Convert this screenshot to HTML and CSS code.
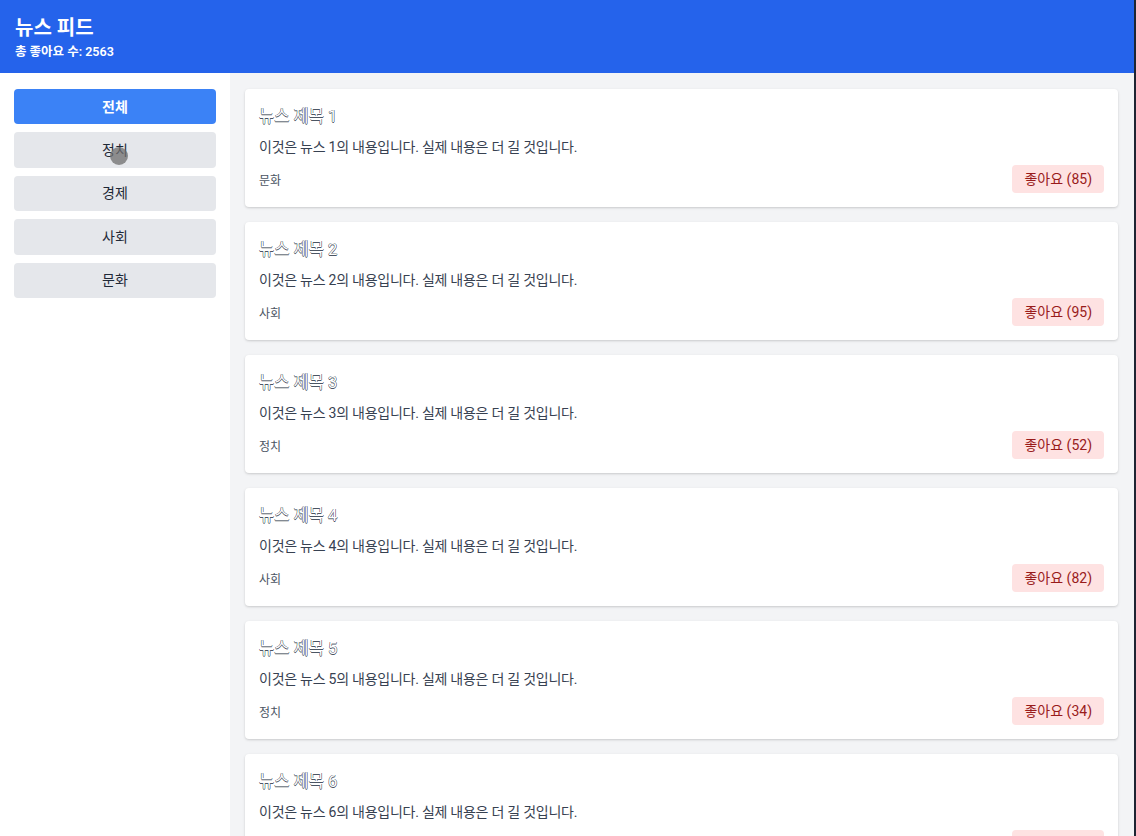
FILE: index.html
```html
<!DOCTYPE html>
<html lang="ko">
<head>
<meta charset="utf-8">
<title>뉴스 피드</title>
<link rel="stylesheet" href="styles.css">
</head>
<body>
<div class="app">
  <header class="header">
    <h1 class="header-title">뉴스 피드</h1>
    <p class="header-sub">총 좋아요 수: 2563</p>
  </header>
  <div class="body-row">
    <aside class="sidebar">
      <button class="cat-btn active">전체</button>
      <button class="cat-btn">정치</button>
      <button class="cat-btn">경제</button>
      <button class="cat-btn">사회</button>
      <button class="cat-btn">문화</button>
    </aside>
    <main class="feed">
      <article class="card">
        <h2 class="card-title">뉴스 제목 1</h2>
        <p class="card-text">이것은 뉴스 1의 내용입니다. 실제 내용은 더 길 것입니다.</p>
        <div class="card-foot"><span class="card-cat">문화</span><button class="like-btn">좋아요 (85)</button></div>
      </article>
      <article class="card">
        <h2 class="card-title">뉴스 제목 2</h2>
        <p class="card-text">이것은 뉴스 2의 내용입니다. 실제 내용은 더 길 것입니다.</p>
        <div class="card-foot"><span class="card-cat">사회</span><button class="like-btn">좋아요 (95)</button></div>
      </article>
      <article class="card">
        <h2 class="card-title">뉴스 제목 3</h2>
        <p class="card-text">이것은 뉴스 3의 내용입니다. 실제 내용은 더 길 것입니다.</p>
        <div class="card-foot"><span class="card-cat">정치</span><button class="like-btn">좋아요 (52)</button></div>
      </article>
      <article class="card">
        <h2 class="card-title">뉴스 제목 4</h2>
        <p class="card-text">이것은 뉴스 4의 내용입니다. 실제 내용은 더 길 것입니다.</p>
        <div class="card-foot"><span class="card-cat">사회</span><button class="like-btn">좋아요 (82)</button></div>
      </article>
      <article class="card">
        <h2 class="card-title">뉴스 제목 5</h2>
        <p class="card-text">이것은 뉴스 5의 내용입니다. 실제 내용은 더 길 것입니다.</p>
        <div class="card-foot"><span class="card-cat">정치</span><button class="like-btn">좋아요 (34)</button></div>
      </article>
      <article class="card">
        <h2 class="card-title">뉴스 제목 6</h2>
        <p class="card-text">이것은 뉴스 6의 내용입니다. 실제 내용은 더 길 것입니다.</p>
        <div class="card-foot"><span class="card-cat">경제</span><button class="like-btn">좋아요 (61)</button></div>
      </article>
    </main>
  </div>
  <div class="touch-dot"></div>
</div>
</body>
</html>
```
FILE: styles.css
```css
html, body {
  margin: 0;
  padding: 0;
  height: 100%;
  overflow: hidden;
}
body {
  font-family: Roboto, "Noto Sans CJK KR", sans-serif;
  background: #1e2433;
}
.app {
  position: relative;
  height: 100vh;
  margin-right: 2px;
  display: flex;
  flex-direction: column;
  background: #f3f4f6;
}
.header {
  background: #2563eb;
  color: #fff;
  padding: 14px 15px 13px;
  height: 46px;
  flex-shrink: 0;
}
.header-title {
  margin: 0;
  font-size: 20px;
  line-height: 28px;
  font-weight: 700;
}
.header-sub {
  margin: 2px 0 0;
  font-size: 12.5px;
  line-height: 16px;
  font-weight: 600;
}
.body-row {
  flex: 1;
  display: flex;
  min-height: 0;
}
.sidebar {
  width: 202px;
  flex-shrink: 0;
  background: #fff;
  padding: 16px 14px;
  display: flex;
  flex-direction: column;
  gap: 8px;
}
.cat-btn {
  font-family: inherit;
  border: none;
  border-radius: 4px;
  background: #e5e7eb;
  color: #1f2937;
  font-size: 14px;
  line-height: 20px;
  height: 35.4px;
  padding: 0;
}
.cat-btn.active {
  background: #3b82f6;
  color: #fff;
  font-weight: 600;
}
.feed {
  flex: 1;
  padding: 16px 16px 16px 15px;
  display: flex;
  flex-direction: column;
  gap: 15px;
  overflow: hidden;
}
.card {
  background: #fff;
  border-radius: 4px;
  padding: 16px 14px 14px 14px;
  box-shadow: 0 1px 3px rgba(0,0,0,0.12), 0 1px 2px rgba(0,0,0,0.06);
  flex-shrink: 0;
}
.card-title {
  margin: 0 0 8px;
  font-size: 16.5px;
  line-height: 24px;
  font-weight: 400;
  color: #fff;
  text-shadow: -0.5px 0 #4b5563, 0.5px 0 #4b5563, 0 -0.5px #4b5563, 0 0.5px #4b5563;
}
.card-text {
  margin: 0 0 8px;
  font-size: 14px;
  line-height: 20px;
  color: #374151;
  letter-spacing: -0.25px;
}
.card-foot {
  display: flex;
  justify-content: space-between;
  align-items: center;
}
.card-cat {
  font-size: 12px;
  line-height: 16px;
  color: #4b5563;
  margin-top: 4px;
}
.like-btn {
  font-family: inherit;
  border: none;
  border-radius: 4px;
  background: #fee2e2;
  color: #991b1b;
  font-size: 14px;
  line-height: 20px;
  padding: 4px 12px;
}
.touch-dot {
  position: absolute;
  left: 110px;
  top: 147px;
  width: 18px;
  height: 18px;
  border-radius: 50%;
  background: rgba(110, 110, 110, 0.75);
}
```
